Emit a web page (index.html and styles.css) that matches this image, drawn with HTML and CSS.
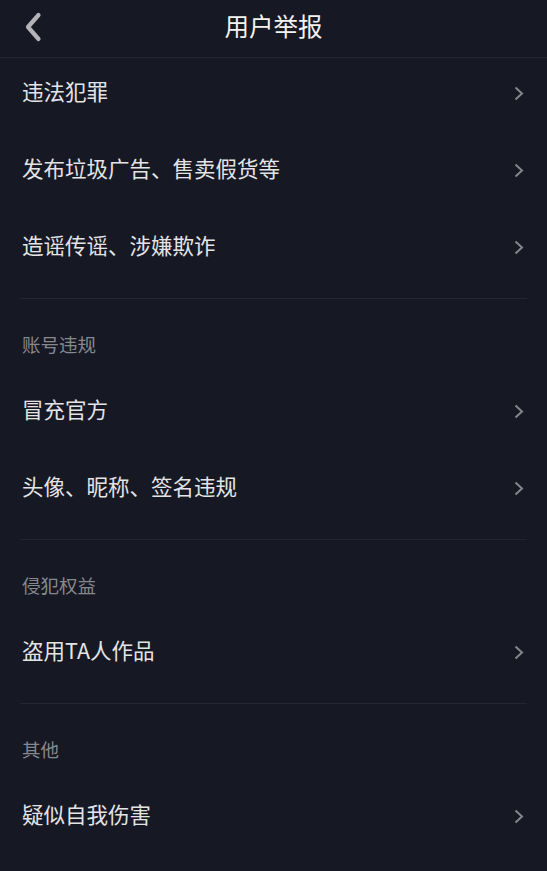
FILE: index.html
```html
<!DOCTYPE html>
<html lang="zh-CN">
<head>
<meta charset="utf-8">
<title>用户举报</title>
<link rel="stylesheet" href="styles.css">
</head>
<body>
<div class="page">
  <header class="topbar">
    <span class="back">
      <svg width="18" height="30" viewBox="0 0 18 30"><polyline points="14.5,3 4,15 14.5,27" fill="none" stroke="#b4b4b8" stroke-width="4.2" stroke-linecap="round" stroke-linejoin="round"/></svg>
    </span>
    <h1 class="title">用户举报</h1>
  </header>

  <section class="group first">
    <div class="item"><span>违法犯罪</span><i class="chev"><svg width="10" height="15" viewBox="0 0 10 15"><polyline points="1.5,1.5 8,7.5 1.5,13.5" fill="none" stroke="#85868c" stroke-width="2"/></svg></i></div>
    <div class="item"><span>发布垃圾广告、售卖假货等</span><i class="chev"><svg width="10" height="15" viewBox="0 0 10 15"><polyline points="1.5,1.5 8,7.5 1.5,13.5" fill="none" stroke="#85868c" stroke-width="2"/></svg></i></div>
    <div class="item"><span>造谣传谣、涉嫌欺诈</span><i class="chev"><svg width="10" height="15" viewBox="0 0 10 15"><polyline points="1.5,1.5 8,7.5 1.5,13.5" fill="none" stroke="#85868c" stroke-width="2"/></svg></i></div>
  </section>

  <section class="group">
    <div class="label">账号违规</div>
    <div class="item"><span>冒充官方</span><i class="chev"><svg width="10" height="15" viewBox="0 0 10 15"><polyline points="1.5,1.5 8,7.5 1.5,13.5" fill="none" stroke="#85868c" stroke-width="2"/></svg></i></div>
    <div class="item"><span>头像、昵称、签名违规</span><i class="chev"><svg width="10" height="15" viewBox="0 0 10 15"><polyline points="1.5,1.5 8,7.5 1.5,13.5" fill="none" stroke="#85868c" stroke-width="2"/></svg></i></div>
  </section>

  <section class="group">
    <div class="label">侵犯权益</div>
    <div class="item"><span>盗用TA人作品</span><i class="chev"><svg width="10" height="15" viewBox="0 0 10 15"><polyline points="1.5,1.5 8,7.5 1.5,13.5" fill="none" stroke="#85868c" stroke-width="2"/></svg></i></div>
  </section>

  <section class="group">
    <div class="label">其他</div>
    <div class="item"><span>疑似自我伤害</span><i class="chev"><svg width="10" height="15" viewBox="0 0 10 15"><polyline points="1.5,1.5 8,7.5 1.5,13.5" fill="none" stroke="#85868c" stroke-width="2"/></svg></i></div>
  </section>
</div>
</body>
</html>
```

FILE: styles.css
```css
html, body {
  margin: 0;
  padding: 0;
  background: #161823;
}
body {
  font-family: "Noto Sans CJK SC", "Noto Sans", sans-serif;
  color: #e6e6e8;
}
.page {
  width: 547px;
  height: 871px;
  overflow: hidden;
  background: #161823;
}
.topbar {
  height: 57px;
  border-bottom: 1px solid #242631;
  display: flex;
  align-items: center;
  justify-content: center;
  position: relative;
}
.back {
  position: absolute;
  left: 24px;
  top: 12px;
  display: flex;
}
.title {
  margin: 0;
  font-size: 24.5px;
  font-weight: 400;
  color: #f2f2f3;
  line-height: 1;
  margin-top: -5px;
}
.group {
  margin: 0 20px;
  padding-bottom: 16px;
  display: flex;
  flex-direction: column;
  gap: 7px;
  border-bottom: 1px solid #232530;
}
.group:last-child {
  border-bottom: none;
}
.label {
  font-size: 18.5px;
  color: #87888e;
  line-height: 24px;
  padding: 33px 0 13px 2px;
}
.item {
  height: 70px;
  display: flex;
  align-items: center;
  justify-content: space-between;
  padding-left: 2px;
  font-size: 21.5px;
  color: #e4e4e6;
}
.item span {
  line-height: 1;
  margin-top: -4px;
}
.chev {
  display: flex;
  margin-right: 3px;
  margin-top: 0;
}
```
